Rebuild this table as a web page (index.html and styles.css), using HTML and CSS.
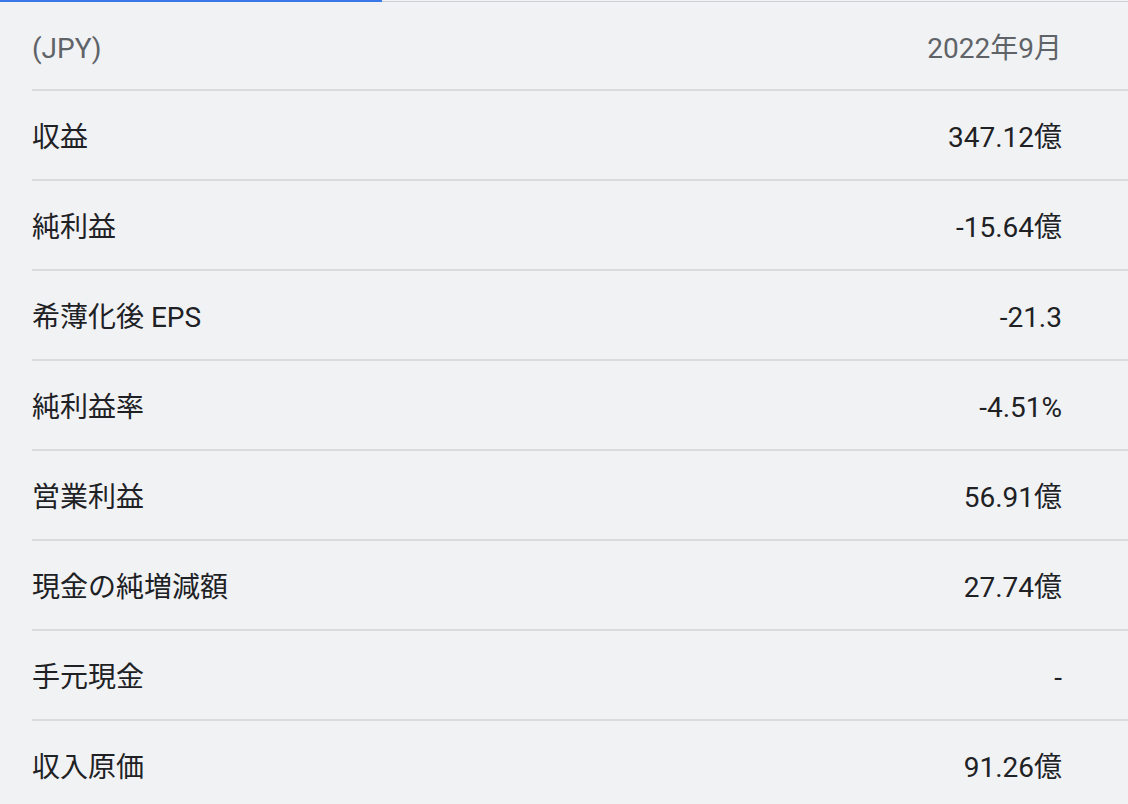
FILE: index.html
```html
<!DOCTYPE html>
<html lang="ja">
<head>
<meta charset="utf-8">
<link rel="stylesheet" href="styles.css">
</head>
<body>
<div class="topbar"><div class="topbar-active"></div></div>
<div class="table">
  <div class="row header"><span>(JPY)</span><span>2022年9月</span></div>
  <div class="row"><span>収益</span><span>347.12億</span></div>
  <div class="row"><span>純利益</span><span>-15.64億</span></div>
  <div class="row"><span>希薄化後 EPS</span><span>-21.3</span></div>
  <div class="row"><span>純利益率</span><span>-4.51%</span></div>
  <div class="row"><span>営業利益</span><span>56.91億</span></div>
  <div class="row"><span>現金の純増減額</span><span>27.74億</span></div>
  <div class="row"><span>手元現金</span><span>-</span></div>
  <div class="row last"><span>収入原価</span><span>91.26億</span></div>
</div>
</body>
</html>
```
FILE: styles.css
```css
html, body {
  margin: 0;
  padding: 0;
  background: #f1f2f4;
}
body {
  width: 1128px;
  height: 804px;
  overflow: hidden;
  font-family: Roboto, "Noto Sans CJK JP", sans-serif;
  color: #202124;
}
.topbar {
  height: 2px;
  background: linear-gradient(to bottom, transparent 0 1px, #cfd0d3 1px 2px);
  position: relative;
}
.topbar-active {
  width: 382px;
  height: 2px;
  background: #3b78e7;
}
.table {
  margin-left: 32px;
}
.row {
  display: flex;
  justify-content: space-between;
  align-items: center;
  height: 82px;
  padding-top: 6px;
  border-bottom: 2px solid #dadbdd;
  padding-right: 66px;
  font-size: 28px;
  line-height: 1;
}
.row.header {
  height: 81px;
  color: #5f6368;
}
.row.last {
  border-bottom: none;
}
```
